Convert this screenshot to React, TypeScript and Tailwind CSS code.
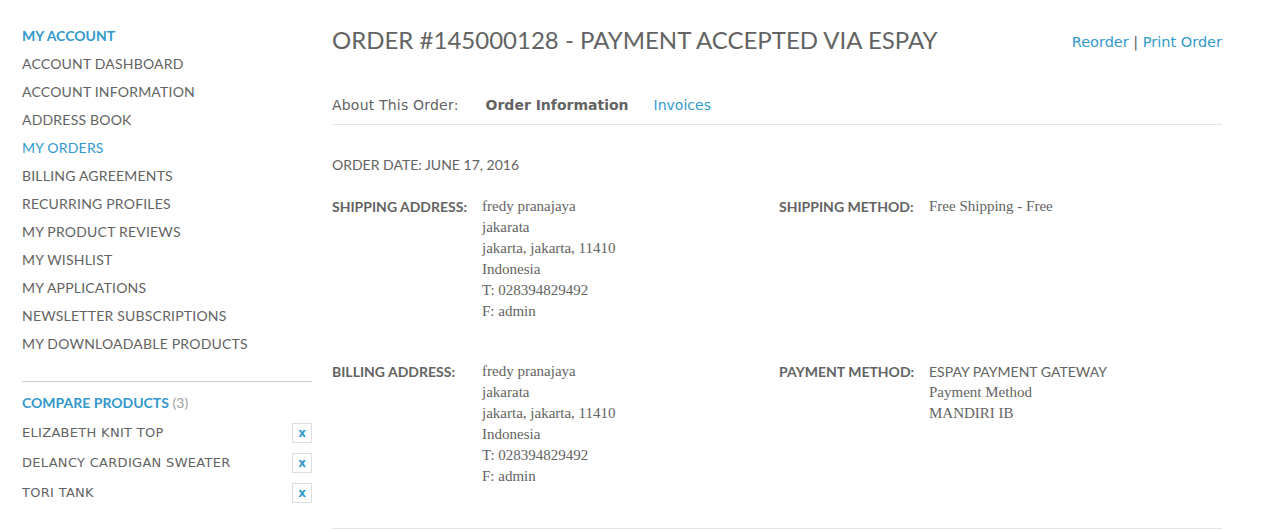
import React from 'react'

const raleway = "font-['Lato','Open_Sans',sans-serif]"
const georgia = "font-['Liberation_Serif','DejaVu_Serif',serif]"
const verdana = "font-['DejaVu_Sans','Liberation_Sans',sans-serif]"

const accountLinks = [
  'Account Dashboard',
  'Account Information',
  'Address Book',
  'My Orders',
  'Billing Agreements',
  'Recurring Profiles',
  'My Product Reviews',
  'My Wishlist',
  'My Applications',
  'Newsletter Subscriptions',
  'My Downloadable Products',
]

const compare = ['Elizabeth Knit Top', 'Delancy Cardigan Sweater', 'Tori Tank']

const address = [
  'fredy pranajaya',
  'jakarata',
  'jakarta, jakarta, 11410',
  'Indonesia',
  'T: 028394829492',
  'F: admin',
]

function Label({ children }: { children: React.ReactNode }) {
  return (
    <div className={`w-[150px] shrink-0 text-[14px] font-bold uppercase leading-[21px] text-[#636363] ${raleway}`}>
      {children}
    </div>
  )
}

function Lines({ lines }: { lines: string[] }) {
  return (
    <div className={`text-[15px] leading-[21px] text-[#636363] ${georgia}`}>
      {lines.map((l) => (
        <div key={l}>{l}</div>
      ))}
    </div>
  )
}

export default function App() {
  return (
    <div className="flex bg-white px-[22px] pt-[25px]">
      <aside className="w-[290px] shrink-0">
        <div className={`text-[14px] font-bold uppercase leading-[22px] text-[#3399cc] ${raleway}`}>My Account</div>
        <ul className={`mt-[3px] ${raleway}`}>
          {accountLinks.map((l) => (
            <li
              key={l}
              className={`text-[14px] tracking-[0.2px] uppercase leading-[28px] ${l === 'My Orders' ? 'text-[#3399cc]' : 'text-[#636363]'}`}
            >
              {l}
            </li>
          ))}
        </ul>
        <div className="mt-[23px] border-t border-[#cccccc]" />
        <div className={`mt-[12px] text-[14px] uppercase leading-[18px] ${raleway}`}>
          <span className="font-bold text-[#3399cc]">Compare Products</span>
          <span className="text-[#a0a0a0]"> (3)</span>
        </div>
        <ul className="mt-[6px]">
          {compare.map((c) => (
            <li key={c} className="flex h-[30px] items-center justify-between">
              <span className={`text-[13px] tracking-[0.3px] uppercase text-[#636363] ${verdana}`}>{c}</span>
              <span className={`flex h-[20px] w-[20px] items-center justify-center border border-[#dddddd] text-[12px] font-bold text-[#3399cc] ${verdana}`}>
                x
              </span>
            </li>
          ))}
        </ul>
      </aside>

      <main className="ml-[20px] w-[890px]">
        <div className="flex items-start justify-between">
          <h1 className={`text-[24px] uppercase leading-[30px] text-[#636363] ${raleway}`}>
            Order #145000128 - Payment Accepted via Espay
          </h1>
          <div className={`mt-[7px] text-[14.5px] text-[#3399cc] ${verdana}`}>
            Reorder <span className="text-[#636363]">|</span> Print Order
          </div>
        </div>

        <div className={`mt-[39px] flex items-center border-b border-[#e5e5e5] pb-[8px] text-[14px] leading-[22px] ${verdana}`}>
          <span className="text-[#636363] tracking-[0.2px]">About This Order:</span>
          <span className="ml-[27px] font-bold text-[#636363]">Order Information</span>
          <span className="ml-[25px] text-[#3399cc]">Invoices</span>
        </div>

        <div className={`mt-[30px] text-[14px] uppercase leading-[20px] text-[#636363] ${raleway}`}>
          Order Date: June 17, 2016
        </div>

        <div className="mt-[21px] flex">
          <div className="flex w-[447px]">
            <Label>Shipping Address:</Label>
            <Lines lines={address} />
          </div>
          <div className="flex">
            <Label>Shipping Method:</Label>
            <Lines lines={['Free Shipping - Free']} />
          </div>
        </div>

        <div className="mt-[39px] flex">
          <div className="flex w-[447px]">
            <Label>Billing Address:</Label>
            <Lines lines={address} />
          </div>
          <div className="flex">
            <Label>Payment Method:</Label>
            <div>
              <div className={`text-[14px] uppercase leading-[21px] text-[#636363] ${raleway}`}>Espay Payment Gateway</div>
              <Lines lines={['Payment Method', 'MANDIRI IB']} />
            </div>
          </div>
        </div>

        <div className="mt-[41px] border-t border-[#e5e5e5]" />
      </main>
    </div>
  )
}
